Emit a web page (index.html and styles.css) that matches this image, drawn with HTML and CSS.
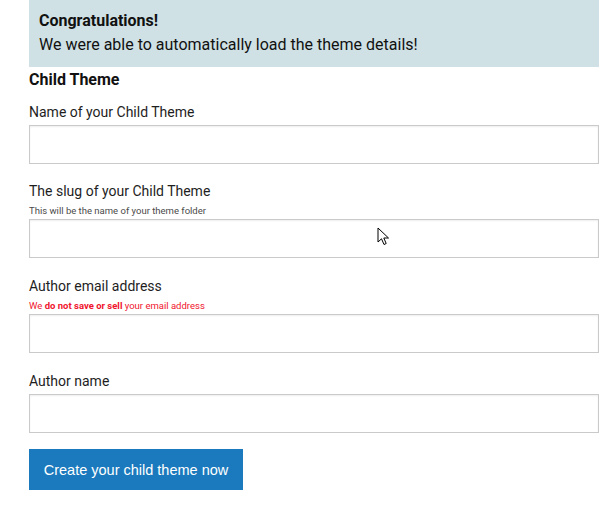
FILE: index.html
```html
<!DOCTYPE html>
<html>
<head>
<meta charset="utf-8">
<link rel="stylesheet" href="styles.css">
</head>
<body>
<div class="page">
  <div class="notice">
    <div class="notice-title">Congratulations!</div>
    <div class="notice-text">We were able to automatically load the theme details!</div>
  </div>
  <h2 class="section-title">Child Theme</h2>
  <form class="form">
    <div class="field field-first">
      <label class="label">Name of your Child Theme</label>
      <input class="input" type="text">
    </div>
    <div class="field">
      <label class="label">The slug of your Child Theme</label>
      <div class="hint">This will be the name of your theme folder</div>
      <div class="input-wrap">
        <input class="input" type="text">
        <svg class="cursor" width="14" height="20" viewBox="0 0 14 20"><path d="M1 1 L1 15 L4.5 11.8 L7 17.5 L9.2 16.5 L6.8 11 L11.5 11 Z" fill="#fff" stroke="#000" stroke-width="1" stroke-linejoin="miter"/></svg>
      </div>
    </div>
    <div class="field">
      <label class="label">Author email address</label>
      <div class="hint hint-red">We <b>do not save or sell</b> your email address</div>
      <input class="input" type="text">
    </div>
    <div class="field">
      <label class="label">Author name</label>
      <input class="input" type="text">
    </div>
    <div class="actions">
      <button class="button" type="button">Create your child theme now</button>
    </div>
  </form>
</div>
</body>
</html>
```
FILE: styles.css
```css
html, body {
  margin: 0;
  padding: 0;
  background: #fff;
}
body {
  font-family: Roboto, "Liberation Sans", sans-serif;
  color: #1e1e1e;
}
.page {
  margin-left: 29px;
  width: 570px;
}
.notice {
  background: #cfe1e5;
  padding: 9px 10px 10px 10px;
  height: 48px;
}
.notice-title {
  font-weight: bold;
  font-size: 16px;
  line-height: 24px;
  color: #111;
}
.notice-text {
  font-size: 16px;
  line-height: 24px;
  color: #111;
}
.section-title {
  margin: 3px 0 0 0;
  font-size: 16px;
  line-height: 20px;
  font-weight: bold;
  color: #111;
}
.form {
  margin-top: 12px;
  display: flex;
  flex-direction: column;
}
.field {
  display: flex;
  flex-direction: column;
  margin-bottom: 18px;
}
.field-first {
  margin-bottom: 17px;
}
.label {
  font-size: 14px;
  line-height: 20px;
  color: #1e1e1e;
  margin-bottom: 3px;
}
.hint {
  font-size: 9.5px;
  line-height: 14px;
  color: #4a4a4a;
  margin-top: 0;
  margin-bottom: 1px;
}
.hint-red {
  color: #f0142d;
}
.hint-red b {
  font-weight: bold;
}
.input-wrap {
  position: relative;
}
.input {
  box-sizing: border-box;
  width: 570px;
  height: 39px;
  margin: 0;
  border: 1px solid #cacaca;
  box-shadow: inset 0 1px 2px rgba(0,0,0,0.07);
  background: #fff;
  display: block;
  font-size: 14px;
}
.cursor {
  position: absolute;
  left: 348px;
  top: 8px;
}
.actions {
  margin-top: -2px;
}
.button {
  background: #1a7abd;
  color: #fff;
  border: none;
  font-family: "Liberation Sans", Arial, sans-serif;
  font-size: 14.5px;
  height: 41px;
  width: 214px;
  padding: 0;
  cursor: pointer;
}
```
